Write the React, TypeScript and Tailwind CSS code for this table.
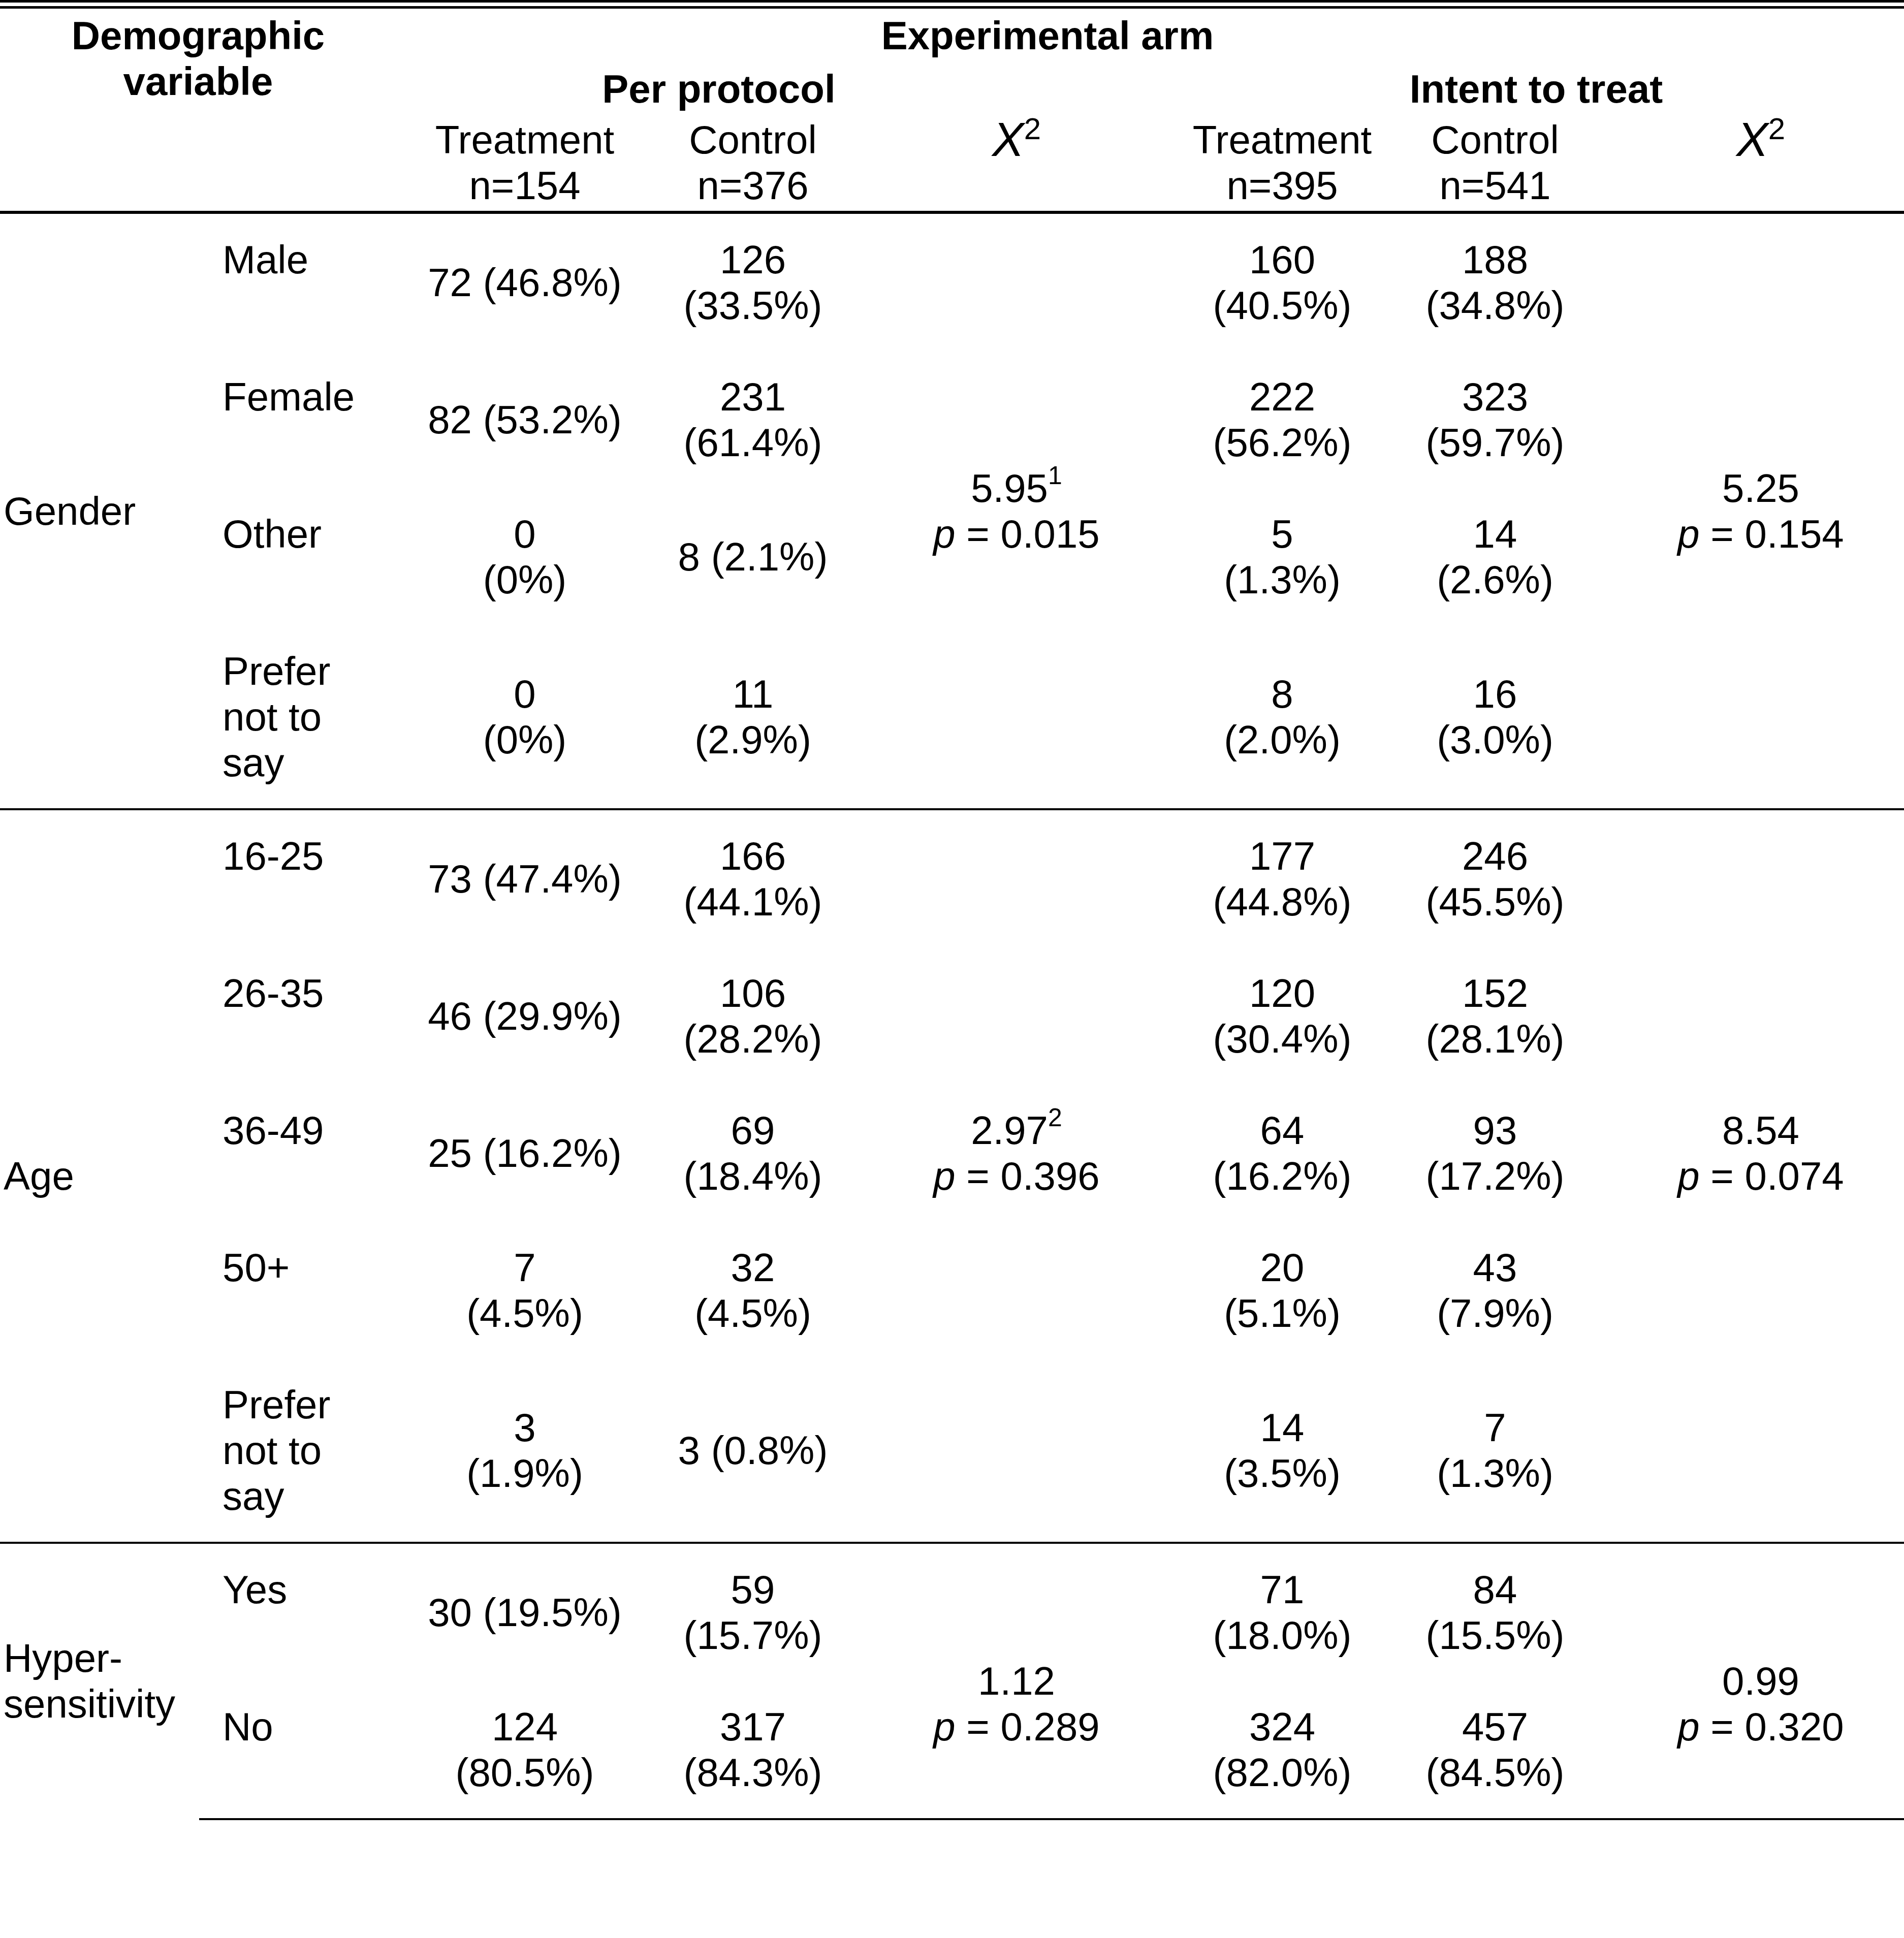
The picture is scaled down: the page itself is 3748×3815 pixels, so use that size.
import React from 'react'

// column widths of the table, left to right
const cols = 'grid grid-cols-[392px_366px_550px_348px_690px_356px_482px_564px]'

const rowStart = ['row-start-1', 'row-start-2', 'row-start-3', 'row-start-4', 'row-start-5']
const rowSpan: Record<number, string> = { 2: 'row-span-2', 4: 'row-span-4', 5: 'row-span-5' }

interface Row {
  label: string
  ppTreat: string
  ppCtrl: string
  ittTreat: string
  ittCtrl: string
}

interface SectionProps {
  label: React.ReactNode
  rows: Row[]
  pp: React.ReactNode
  itt: React.ReactNode
  statPad?: string
  closed?: boolean
}

const Lines = ({ text }: { text: string }) => (
  <>
    {text.split('|').map((t, i) => (
      <div key={i}>{t}</div>
    ))}
  </>
)

const Chi = () => (
  <span className="whitespace-nowrap">
    <span className="italic text-[94px]">X</span>
    <sup className="text-[60px] -top-[0.55em]">2</sup>
  </span>
)

const Stat = ({ value, sup, p }: { value: string; sup?: string; p: string }) => (
  <div className="text-center">
    <div>
      {value}
      {sup && <sup className="text-[50px] -top-[0.7em]">{sup}</sup>}
    </div>
    <div>
      <span className="italic">p</span> = {p}
    </div>
  </div>
)

const Section: React.FC<SectionProps> = ({ label, rows, pp, itt, statPad = '', closed = true }) => {
  const span = rowSpan[rows.length]
  const cell = 'flex flex-col items-center justify-center text-center py-[45px]'
  return (
    <div className={closed ? 'border-b-4 border-black' : ''}>
      <div className={cols}>
        <div className={`col-start-1 row-start-1 ${span} flex items-center pl-[7px]`}>{label}</div>
        <div className={`col-start-5 row-start-1 ${span} flex items-center justify-center ${statPad}`}>{pp}</div>
        <div className={`col-start-8 row-start-1 ${span} flex items-center justify-center ${statPad}`}>{itt}</div>
        {rows.map((r, i) => (
          <React.Fragment key={r.label}>
            <div className={`col-start-2 ${rowStart[i]} pl-[46px] pr-[10px] py-[45px]`}>{r.label}</div>
            <div className={`col-start-3 ${rowStart[i]} ${cell}`}><Lines text={r.ppTreat} /></div>
            <div className={`col-start-4 ${rowStart[i]} ${cell}`}><Lines text={r.ppCtrl} /></div>
            <div className={`col-start-6 ${rowStart[i]} ${cell}`}><Lines text={r.ittTreat} /></div>
            <div className={`col-start-7 ${rowStart[i]} ${cell}`}><Lines text={r.ittCtrl} /></div>
          </React.Fragment>
        ))}
      </div>
    </div>
  )
}

const gender: Row[] = [
  { label: 'Male', ppTreat: '72 (46.8%)', ppCtrl: '126|(33.5%)', ittTreat: '160|(40.5%)', ittCtrl: '188|(34.8%)' },
  { label: 'Female', ppTreat: '82 (53.2%)', ppCtrl: '231|(61.4%)', ittTreat: '222|(56.2%)', ittCtrl: '323|(59.7%)' },
  { label: 'Other', ppTreat: '0|(0%)', ppCtrl: '8 (2.1%)', ittTreat: '5|(1.3%)', ittCtrl: '14|(2.6%)' },
  { label: 'Prefer not to say', ppTreat: '0|(0%)', ppCtrl: '11|(2.9%)', ittTreat: '8|(2.0%)', ittCtrl: '16|(3.0%)' },
]

const age: Row[] = [
  { label: '16-25', ppTreat: '73 (47.4%)', ppCtrl: '166|(44.1%)', ittTreat: '177|(44.8%)', ittCtrl: '246|(45.5%)' },
  { label: '26-35', ppTreat: '46 (29.9%)', ppCtrl: '106|(28.2%)', ittTreat: '120|(30.4%)', ittCtrl: '152|(28.1%)' },
  { label: '36-49', ppTreat: '25 (16.2%)', ppCtrl: '69|(18.4%)', ittTreat: '64|(16.2%)', ittCtrl: '93|(17.2%)' },
  { label: '50+', ppTreat: '7|(4.5%)', ppCtrl: '32|(4.5%)', ittTreat: '20|(5.1%)', ittCtrl: '43|(7.9%)' },
  { label: 'Prefer not to say', ppTreat: '3|(1.9%)', ppCtrl: '3 (0.8%)', ittTreat: '14|(3.5%)', ittCtrl: '7|(1.3%)' },
]

const hyper: Row[] = [
  { label: 'Yes', ppTreat: '30 (19.5%)', ppCtrl: '59|(15.7%)', ittTreat: '71|(18.0%)', ittCtrl: '84|(15.5%)' },
  { label: 'No', ppTreat: '124|(80.5%)', ppCtrl: '317|(84.3%)', ittTreat: '324|(82.0%)', ittCtrl: '457|(84.5%)' },
]

export default function App() {
  return (
    <div className="w-[3748px] min-h-[3815px] bg-white text-black font-['Liberation_Sans',Arial,sans-serif] text-[78px] leading-[90px]">
      {/* double rule on top */}
      <div className="h-[17px] border-y-[5px] border-black" />

      {/* header */}
      <div className={`${cols} grid-rows-[105px_100px_auto] pt-[8px] pb-[5px] border-b-[6px] border-black`}>
        <div className="col-start-1 col-span-2 row-start-1 row-span-2 text-center pl-[22px] font-bold">
          Demographic
          <br />
          variable
        </div>
        <div className="col-start-3 col-span-6 row-start-1 text-center pr-[382px] font-bold">Experimental arm</div>
        <div className="col-start-3 col-span-3 row-start-2 text-center pr-[274px] font-bold">Per protocol</div>
        <div className="col-start-6 col-span-3 row-start-2 text-center pr-[46px] font-bold">Intent to treat</div>
        <div className="col-start-3 row-start-3 text-center"><Lines text="Treatment|n=154" /></div>
        <div className="col-start-4 row-start-3 text-center"><Lines text="Control|n=376" /></div>
        <div className="col-start-5 row-start-3 text-center"><Chi /></div>
        <div className="col-start-6 row-start-3 text-center"><Lines text="Treatment|n=395" /></div>
        <div className="col-start-7 row-start-3 text-center"><Lines text="Control|n=541" /></div>
        <div className="col-start-8 row-start-3 text-center"><Chi /></div>
      </div>

      <Section
        label="Gender"
        rows={gender}
        pp={<Stat value="5.95" sup="1" p="0.015" />}
        itt={<Stat value="5.25" p="0.154" />}
      />
      <Section
        label="Age"
        rows={age}
        pp={<Stat value="2.97" sup="2" p="0.396" />}
        itt={<Stat value="8.54" p="0.074" />}
        statPad="pb-[90px]"
      />
      <Section
        label={
          <div>
            Hyper-
            <br />
            sensitivity
          </div>
        }
        rows={hyper}
        pp={<Stat value="1.12" p="0.289" />}
        itt={<Stat value="0.99" p="0.320" />}
        statPad="pt-[90px]"
        closed={false}
      />
      <div className="ml-[392px] h-[4px] bg-black" />
    </div>
  )
}
